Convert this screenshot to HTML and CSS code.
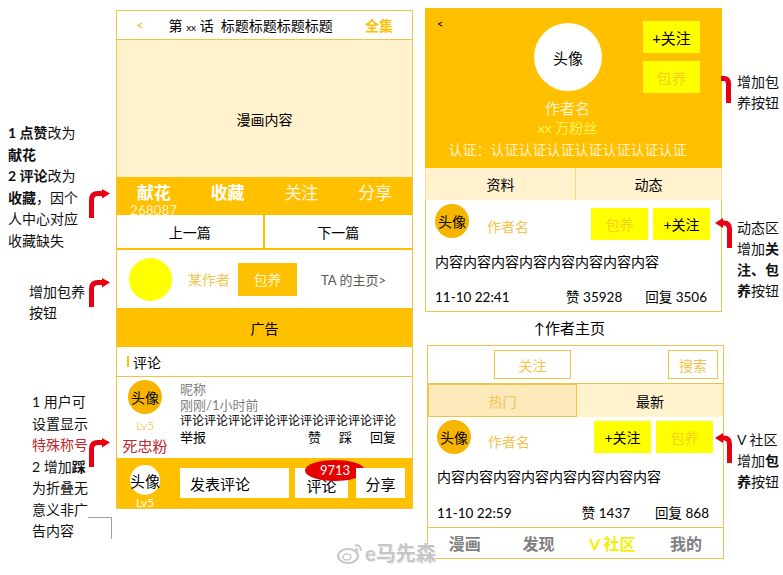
FILE: index.html
```html
<!DOCTYPE html>
<html lang="zh">
<head>
<meta charset="utf-8">
<title>漫画改版说明</title>
<link rel="stylesheet" href="styles.css">
</head>
<body>
<div class="canvas">
  <aside class="notes-left">
    <div class="note note-a">
      <p class="note-text"><b>1 点赞</b>改为<br><b>献花</b><br><b>2 评论</b>改为<br><b>收藏</b>，因个<br>人中心对应<br>收藏缺失</p>
      <svg class="arrow-l" width="22" height="29" viewBox="0 0 22 29"><path d="M3.5 29 V11 Q3.5 4.5 10 4.5 H15" fill="none" stroke="#e60012" stroke-width="5"/><polygon points="14,0 22,4.5 14,9.5" fill="#e60012"/></svg>
    </div>
    <div class="note note-b">
      <p class="note-text">增加包养<br>按钮</p>
      <svg class="arrow-l" width="22" height="29" viewBox="0 0 22 29"><path d="M3.5 29 V11 Q3.5 4.5 10 4.5 H15" fill="none" stroke="#e60012" stroke-width="5"/><polygon points="14,0 22,4.5 14,9.5" fill="#e60012"/></svg>
    </div>
    <div class="note note-c">
      <p class="note-text">1 用户可<br>设置显示<br><span class="red">特殊称号</span><br>2 增加<b>踩</b><br>为折叠无<br>意义非广<br>告内容</p>
      <div class="note-side">
        <svg class="arrow-l" width="22" height="29" viewBox="0 0 22 29"><path d="M3.5 29 V11 Q3.5 4.5 10 4.5 H15" fill="none" stroke="#e60012" stroke-width="5"/><polygon points="14,0 22,4.5 14,9.5" fill="#e60012"/></svg>
        <div class="bracket"></div>
      </div>
    </div>
  </aside>

  <section class="phone reader">
    <header class="reader-top">
      <span class="back">&lt;</span>
      <h1 class="episode">第 <small>xx</small> 话&nbsp; 标题标题标题标题</h1>
      <span class="all">全集</span>
    </header>
    <div class="comic">漫画内容</div>
    <nav class="actions">
      <div class="action"><b>献花</b><span class="count">268087</span></div>
      <div class="action"><b>收藏</b></div>
      <div class="action">关注</div>
      <div class="action">分享</div>
    </nav>
    <div class="pager">
      <div class="pager-cell">上一篇</div>
      <div class="pager-cell">下一篇</div>
    </div>
    <div class="author-row">
      <div class="author-dot"></div>
      <span class="author-name">某作者</span>
      <span class="btn-support">包养</span>
      <span class="author-home">TA 的主页&gt;</span>
    </div>
    <div class="ad">广告</div>
    <div class="comment-head"><i class="mark"></i>评论</div>
    <div class="comment">
      <div class="comment-user">
        <div class="avatar">头像</div>
        <div class="lv">Lv5</div>
        <div class="honor">死忠粉</div>
      </div>
      <div class="comment-body">
        <div class="meta">昵称</div>
        <div class="meta">刚刚/1小时前</div>
        <div class="ctext">评论评论评论评论评论评论评论评论评论</div>
        <div class="ops"><span>举报</span><span class="ops-right"><span>赞</span><span>踩</span><span>回复</span></span></div>
      </div>
    </div>
    <footer class="reader-bottom">
      <div class="me"><div class="avatar white">头像</div><div class="lv lv-white">Lv5</div></div>
      <div class="box box-input">发表评论</div>
      <div class="box box-comment"><span class="box-label">评论</span><span class="badge">9713</span></div>
      <div class="box box-share">分享</div>
    </footer>
  </section>

  <div class="right-col">
    <section class="profile">
      <header class="profile-head">
        <div class="profile-top">
          <span class="pback">&lt;</span>
          <div class="big-avatar">头像</div>
          <div class="head-btns"><span class="ybtn">+关注</span><span class="ybtn faint">包养</span></div>
        </div>
        <div class="profile-info">
          <div class="pname">作者名</div>
          <div class="pfans">xx 万粉丝</div>
          <div class="pcert">认证：认证认证认证认证认证认证认证</div>
        </div>
      </header>
      <div class="tabs">
        <div class="tab">资料</div>
        <div class="tab">动态</div>
      </div>
      <article class="post post-profile">
        <div class="post-head">
          <div class="avatar">头像</div>
          <span class="post-author">作者名</span>
          <span class="ybtn faint first">包养</span>
          <span class="ybtn">+关注</span>
        </div>
        <p class="post-text">内容内容内容内容内容内容内容内容</p>
        <div class="post-foot"><span>11-10 22:41</span><span class="likes">赞 35928</span><span class="replies">回复 3506</span></div>
      </article>
    </section>

    <div class="caption">↑作者主页</div>

    <section class="community">
      <div class="com-top">
        <span class="obtn obtn-follow">关注</span>
        <span class="obtn obtn-search">搜索</span>
      </div>
      <div class="tabs tabs-com">
        <div class="tab hot">热门</div>
        <div class="tab">最新</div>
      </div>
      <article class="post post-com">
        <div class="post-head">
          <div class="avatar">头像</div>
          <span class="post-author">作者名</span>
          <span class="ybtn first">+关注</span>
          <span class="ybtn faint">包养</span>
        </div>
        <p class="post-text">内容内容内容内容内容内容内容内容</p>
        <div class="post-foot"><span>11-10 22:59</span><span class="likes">赞 1437</span><span class="replies">回复 868</span></div>
      </article>
      <nav class="bottom-nav">
        <span>漫画</span><span>发现</span><span class="on">V 社区</span><span>我的</span>
      </nav>
    </section>
  </div>

  <aside class="notes-right">
    <div class="note-r note-r1">
      <svg class="arrow-r" width="25" height="30" viewBox="0 0 25 30"><path d="M9 4.5 H12 Q16.5 4.5 16.5 10 V29" fill="none" stroke="#e60012" stroke-width="5"/></svg>
      <p class="note-text">增加包<br>养按钮</p>
    </div>
    <div class="note-r note-r2">
      <svg class="arrow-r" width="25" height="30" viewBox="0 0 25 30"><polygon points="11,0 3,5 11,10" fill="#e60012"/><path d="M10 5 H12 Q17.5 5 17.5 11 V30" fill="none" stroke="#e60012" stroke-width="5"/></svg>
      <p class="note-text">动态区<br>增加<b>关</b><br><b>注、包</b><br><b>养</b>按钮</p>
    </div>
    <div class="note-r note-r3">
      <svg class="arrow-r" width="25" height="30" viewBox="0 0 25 30"><polygon points="11,0 3,5 11,10" fill="#e60012"/><path d="M10 5 H12 Q17.5 5 17.5 11 V30" fill="none" stroke="#e60012" stroke-width="5"/></svg>
      <p class="note-text">V 社区<br>增加<b>包</b><br><b>养</b>按钮</p>
    </div>
  </aside>

  <div class="watermark">
    <svg width="28" height="22" viewBox="0 0 28 22"><ellipse cx="12" cy="14" rx="10" ry="7" fill="none" stroke="#c9c9c9" stroke-width="2.2"/><ellipse cx="11" cy="15" rx="4" ry="3" fill="none" stroke="#c9c9c9" stroke-width="1.6"/><path d="M19 3 Q25 3 25 9" fill="none" stroke="#c9c9c9" stroke-width="2"/><path d="M19 7 Q21.5 7 21.5 9.5" fill="none" stroke="#c9c9c9" stroke-width="1.8"/></svg>
    <span class="wm-text">e马先森</span>
  </div>
</div>
</body>
</html>
```

FILE: styles.css
```css
* { box-sizing: border-box; }
html, body { margin: 0; padding: 0; background: #fff; }
body {
  font-family: "Lato", "Noto Sans CJK SC", sans-serif;
  font-size: 14px;
  color: #000;
}
p, h1 { margin: 0; }
b { font-weight: 700; }

.canvas {
  position: relative;
  display: flex;
  align-items: flex-start;
  width: 783px;
  height: 575px;
  overflow: hidden;
}

/* ---------- left notes ---------- */
.notes-left {
  flex: none;
  width: 116px;
  display: flex;
  flex-direction: column;
}
.note {
  display: flex;
  justify-content: space-between;
  align-items: flex-start;
  padding-right: 6px;
}
.note-text {
  font-size: 14px;
  line-height: 21.5px;
  color: #111;
  white-space: nowrap;
}
.red { color: #c0272d; }
.note-a { margin-top: 122px; }
.note-a .note-text { margin-left: 8px; }
.note-a .arrow-l { margin-top: 67px; }
.note-b { margin-top: 27px; }
.note-b .note-text { margin-left: 29px; margin-top: 3px; line-height: 21px; }
.note-c { margin-top: 68px; padding-right: 4px; }
.note-c .note-text { margin-left: 32px; }
.note-side {
  display: flex;
  flex-direction: column;
  align-items: flex-end;
  width: 24px;
}
.note-side .arrow-l { margin-top: 47px; margin-right: 2px; }
.bracket {
  width: 24px;
  height: 22px;
  margin-top: 50px;
  border-top: 1px solid #a0a0a0;
  border-right: 1px solid #a0a0a0;
}
.arrow-l, .arrow-r { flex: none; display: block; }

/* ---------- reader phone ---------- */
.phone {
  flex: none;
  width: 297px;
  margin-top: 10px;
  border: 1px solid #f0c44c;
  background: #fff;
}
.reader-top {
  display: flex;
  align-items: center;
  height: 29px;
  border-bottom: 1px solid #f0c44c;
  padding: 0 19px 0 19px;
}
.back { color: #f2c451; font-size: 13px; font-weight: 700; }
.episode {
  margin-left: 25px;
  font-size: 14px;
  font-weight: 400;
  white-space: nowrap;
}
.episode small { font-size: 10px; }
.all { margin-left: auto; color: #ffc000; font-weight: 700; font-size: 14px; }

.comic {
  height: 137px;
  background: #fff2cc;
  display: flex;
  align-items: center;
  justify-content: center;
  padding-top: 20px;
  font-size: 14px;
}

.actions {
  height: 38px;
  background: #ffc000;
  display: grid;
  grid-template-columns: repeat(4, 1fr);
  color: #fff;
  padding-top: 5px;
}
.action {
  display: flex;
  flex-direction: column;
  align-items: center;
  font-size: 17px;
  line-height: 22px;
  color: #fff7e0;
}
.action b { color: #fff; }
.count {
  font-size: 13px;
  line-height: 12px;
  color: #fff2cc;
  letter-spacing: 0.3px;
}

.pager {
  height: 35px;
  display: grid;
  grid-template-columns: 1fr 1fr;
  border-bottom: 2px solid #ffc000;
}
.pager-cell {
  display: flex;
  align-items: center;
  justify-content: center;
  font-size: 14px;
}
.pager-cell:first-child { border-right: 2px solid #ffc000; }

.author-row {
  height: 58px;
  display: flex;
  align-items: center;
}
.author-dot {
  width: 43px;
  height: 43px;
  border-radius: 50%;
  background: #ffff00;
  margin-left: 12px;
}
.author-name { margin-left: 16px; color: #f2c451; font-size: 14px; }
.btn-support {
  margin-left: 8px;
  width: 59px;
  height: 33px;
  background: #ffc000;
  color: #fff2cc;
  display: flex;
  align-items: center;
  justify-content: center;
  font-size: 14px;
}
.author-home { margin-left: 24px; color: #595959; font-size: 13px; }

.ad {
  height: 39px;
  background: #ffc000;
  display: flex;
  align-items: center;
  justify-content: center;
  font-size: 14px;
}

.comment-head {
  height: 30px;
  display: flex;
  align-items: center;
  border-bottom: 1px solid #f0c44c;
  font-size: 14px;
  padding-left: 10px;
}
.mark {
  width: 2px;
  height: 11px;
  background: #ffc000;
  margin-right: 4px;
}

.comment {
  height: 81px;
  display: flex;
}
.comment-user {
  width: 56px;
  display: flex;
  flex-direction: column;
  align-items: center;
  padding-top: 3px;
}
.avatar {
  width: 34px;
  height: 34px;
  border-radius: 50%;
  background: #f7b500;
  display: flex;
  align-items: center;
  justify-content: center;
  font-size: 14px;
  flex: none;
  white-space: nowrap;
}
.lv { font-size: 12px; line-height: 14px; color: #f2d27a; margin-top: 5px; }
.honor { font-size: 15px; line-height: 20px; color: #c0272d; margin-top: 3px; }
.comment-body {
  margin-left: 7px;
  width: 216px;
  padding-top: 4px;
  font-size: 12px;
  line-height: 16px;
}
.meta { color: #7f7f7f; font-size: 13px; }
.ctext { white-space: nowrap; }
.ops { display: flex; font-size: 13px; }
.ops-right { margin-left: auto; display: flex; gap: 18px; }

.reader-bottom {
  height: 50px;
  background: #ffc000;
  display: flex;
  align-items: flex-start;
}
.me {
  width: 56px;
  display: flex;
  flex-direction: column;
  align-items: center;
  padding-top: 7px;
}
.avatar.white {
  width: 30px;
  height: 30px;
  background: #fff;
  font-size: 15px;
}
.lv-white { color: #fff; margin-top: 1px; }
.box {
  position: relative;
  margin-top: 10px;
  height: 30px;
  background: #fff;
  display: flex;
  align-items: center;
  font-size: 15px;
}
.box-input { margin-left: 7px; width: 109px; padding-left: 10px; }
.box-comment { margin-left: 6px; width: 53px; justify-content: center; }
.box-label { padding-top: 4px; }
.box-share { margin-left: 8px; width: 49px; justify-content: center; }
.badge {
  position: absolute;
  left: 10px;
  top: -8px;
  width: 60px;
  height: 21px;
  border-radius: 50%;
  background: #e60000;
  color: #fff;
  font-size: 13px;
  line-height: 21px;
  text-align: center;
}

/* ---------- right column ---------- */
.right-col {
  flex: none;
  width: 297px;
  margin-left: 12px;
  margin-top: 8px;
  display: flex;
  flex-direction: column;
}
.profile-head {
  height: 160px;
  background: #ffc000;
  padding-top: 13px;
}
.profile-top {
  display: grid;
  grid-template-columns: 109px 68px 120px;
  height: 72px;
}
.pback { font-size: 11px; line-height: 12px; padding-left: 12px; margin-top: -3px; }
.big-avatar {
  width: 68px;
  height: 68px;
  margin-top: 2px;
  border-radius: 50%;
  background: #fff;
  display: flex;
  align-items: center;
  justify-content: center;
  font-size: 15px;
}
.head-btns {
  display: flex;
  flex-direction: column;
  gap: 8px;
  padding-left: 41px;
}
.ybtn {
  width: 57px;
  height: 32px;
  background: #ffff00;
  display: flex;
  align-items: center;
  justify-content: center;
  font-size: 15px;
  color: #000;
  flex: none;
}
.ybtn.faint { color: #f2d21a; }
.profile-info {
  margin-top: 5px;
  padding-right: 12px;
  text-align: center;
  white-space: nowrap;
}
.pname { line-height: 20px; font-size: 15px; color: #fff2cc; }
.pfans { line-height: 20px; font-size: 14px; color: #fff45a; }
.pcert { line-height: 24px; font-size: 14px; color: #fff2cc; }

.tabs {
  height: 32px;
  display: grid;
  grid-template-columns: 150px 1fr;
  background: #fff2cc;
  border-left: 1px solid #f6e2a6;
  border-right: 1px solid #f6e2a6;
}
.tab {
  display: flex;
  align-items: center;
  justify-content: center;
  font-size: 14px;
}
.tab:first-child { border-right: 1px solid #f3d88e; }

.post {
  display: flex;
  flex-direction: column;
  background: #fff;
}
.post-profile {
  height: 112px;
  padding: 4px 11px 0 9px;
  border: 1px solid #f0c44c;
  border-top: none;
}
.post-head {
  display: flex;
  align-items: flex-start;
  height: 36px;
}
.post-author { margin-left: 18px; margin-top: 13px; line-height: 20px; color: #f2c451; font-size: 14px; }
.post-head .ybtn { margin-top: 4px; margin-left: 5px; font-size: 14px; }
.post-head .ybtn.first { margin-left: auto; }
.post-text { margin-top: 12px; line-height: 20px; font-size: 14px; white-space: nowrap; }
.post-foot {
  display: flex;
  margin-top: 16px;
  line-height: 18px;
  font-size: 13.5px;
  padding-right: 3px;
}
.likes { margin-left: auto; }
.replies { margin-left: 23px; }

.caption {
  height: 33px;
  line-height: 33px;
  text-align: center;
  padding-right: 8px;
  font-size: 15px;
}

.community {
  margin-left: 2px;
  width: 297px;
  border: 1px solid #f0c44c;
  background: #fff;
}
.com-top {
  height: 38px;
  display: flex;
  align-items: center;
  border-bottom: 1px solid #f0c44c;
}
.obtn {
  height: 29px;
  border: 1px solid #f0c44c;
  color: #f2c451;
  display: flex;
  align-items: center;
  justify-content: center;
  font-size: 14px;
}
.obtn-follow { margin-left: 66px; width: 77px; }
.obtn-search { margin-left: auto; margin-right: 5px; width: 50px; }
.tabs-com {
  height: 33px;
  border: none;
  grid-template-columns: 149px 1fr;
}
.tab.hot {
  background: #fde9b9;
  border: 1px solid #f0c44c;
  color: #f2c451;
}
.post-com {
  height: 110px;
  padding: 3px 10px 0 9px;
}
.post-com .post-author { margin-left: 17px; margin-top: 12px; }
.post-com .post-head .ybtn { margin-top: 1px; }
.post-com .post-text { margin-top: 11px; }
.post-com .post-foot { margin-top: 17px; padding-right: 4px; }
.post-com .replies { margin-left: 25px; }

.bottom-nav {
  height: 31px;
  border-top: 1px solid #f0c44c;
  display: grid;
  grid-template-columns: repeat(4, 1fr);
  align-items: center;
  text-align: center;
  font-size: 16px;
  font-weight: 700;
  color: #7f7f7f;
}
.bottom-nav .on { color: #f6ee00; }

/* ---------- right notes ---------- */
.notes-right {
  flex: none;
  width: 71px;
  margin-left: -10px;
  display: flex;
  flex-direction: column;
}
.note-r { display: flex; align-items: flex-start; }
.note-r .note-text { line-height: 21px; }
.note-r1 { margin-top: 72px; }
.note-r1 .note-text { line-height: 20.5px; }
.note-r1 .arrow-r { margin-top: 2px; }
.note-r2 { margin-top: 104px; }
.note-r2 .arrow-r { margin-top: 1px; }
.note-r3 { margin-top: 128px; }
.note-r3 .arrow-r { margin-top: 4px; }

/* ---------- watermark ---------- */
.watermark {
  position: absolute;
  left: 336px;
  top: 538px;
  display: flex;
  align-items: center;
  gap: 1px;
}
.wm-text {
  font-size: 20px;
  font-weight: 700;
  color: #c6c6c6;
  text-shadow: 0 0 2px #fff, 1px 1px 0 #e6e6e6;
}
```
